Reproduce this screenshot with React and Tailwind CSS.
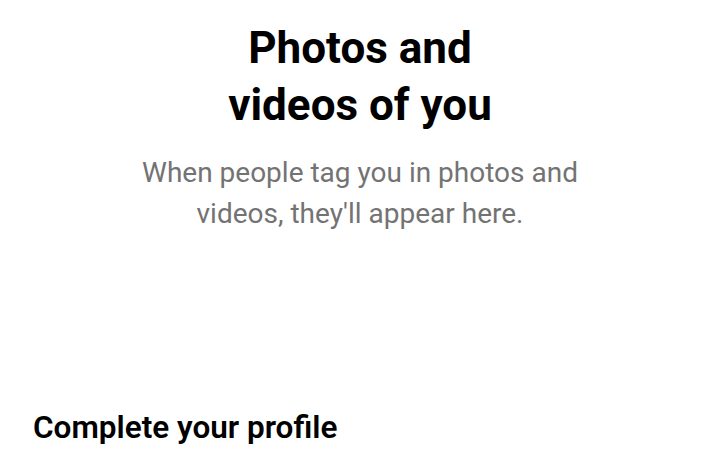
export default function App() {
    return (
        <div
            className="w-[720px] h-[454px] bg-white overflow-hidden flex flex-col"
            style={{ fontFamily: "Roboto, 'Noto Sans', sans-serif" }}
        >
            <div className="flex flex-col items-center text-center pt-[20px]">
                <h1 className="text-[44px] leading-[57px] font-bold text-black">
                    Photos and
                    <br />
                    videos of you
                </h1>
                <p className="mt-[18px] text-[28px] leading-[41px] text-[#737373]">
                    When people tag you in photos and
                    <br />
                    videos, they'll appear here.
                </p>
            </div>
            <div className="mt-auto px-[33px] pb-[4px]">
                <h2 className="text-[31.5px] leading-[44px] font-semibold text-black">
                    Complete your profile
                </h2>
            </div>
        </div>
    );
}
